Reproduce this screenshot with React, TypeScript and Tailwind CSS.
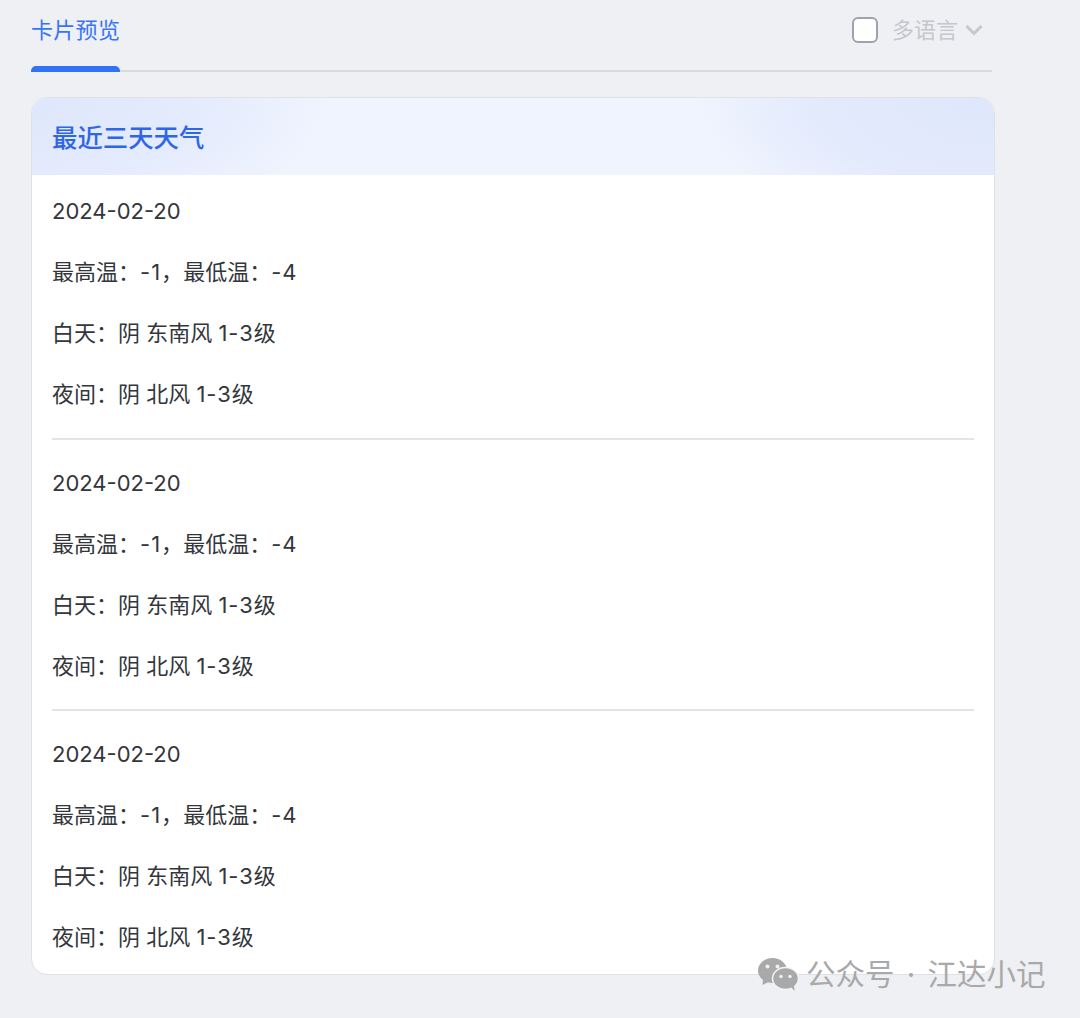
import React from "react";

const Num = ({ children }: { children: React.ReactNode }) => (
  <span className="tracking-[1px]">{children}</span>
);

const WechatLogo = () => (
  <svg width="42" height="34" viewBox="0 0 42 34" className="shrink-0">
    {/* big bubble */}
    <ellipse cx="15.5" cy="13.5" rx="14.5" ry="12.5" fill="#a9a9a9" />
    <path d="M6 22 L5.5 28 L12.5 24.5 Z" fill="#a9a9a9" />
    <circle cx="10.5" cy="9.5" r="2" fill="#eef0f3" />
    <circle cx="20.5" cy="9.5" r="2" fill="#eef0f3" />
    {/* small bubble */}
    <ellipse cx="28.5" cy="21.5" rx="13" ry="11" fill="#a9a9a9" stroke="#f4f5f7" strokeWidth="1.5" />
    <path d="M34 30 L37.5 34 L37 27 Z" fill="#a9a9a9" />
    <circle cx="24" cy="19.5" r="1.7" fill="#eef0f3" />
    <circle cx="33" cy="19.5" r="1.7" fill="#eef0f3" />
  </svg>
);

const sections = ["mt-0", "mt-[13px] border-t-2 border-[#e3e4e7] pt-[13px]", "mt-[12px] border-t-2 border-[#e3e4e7] pt-[13px]"];

const App = () => {
  return (
    <div
      className="relative h-[1018px] w-[1080px] overflow-hidden bg-[#eef0f3] pl-[31px]"
      style={{ fontFamily: 'Inter, "Noto Sans CJK SC", sans-serif' }}
    >
      {/* Tabs */}
      <div className="flex h-[72px] w-[961px] items-start justify-between border-b-2 border-[#d8dadd]">
        <div className="relative h-[70px] w-[89px]">
          <div className="whitespace-nowrap pt-[15px] text-[22px] leading-[30px] tracking-[0.3px] text-[#3a74f6]">卡片预览</div>
          <div className="absolute bottom-[-2px] left-0 h-[6px] w-[89px] rounded-t-[5px] bg-[#3273f6]" />
        </div>
        <div className="flex items-center pt-[15px] pr-[9px]">
          <div className="h-[26px] w-[26px] rounded-[6px] border-2 border-[#9ca3af] bg-white" />
          <span className="ml-[14px] text-[22px] leading-[30px] text-[#c5c7cc]">多语言</span>
          <svg width="18" height="12" viewBox="0 0 18 12" className="ml-[7px]" fill="none" stroke="#c5c7cc" strokeWidth="3">
            <path d="M1.5 2 L9 9.5 L16.5 2" />
          </svg>
        </div>
      </div>

      {/* Card */}
      <div className="mt-[25px] h-[878px] w-[964px] overflow-hidden rounded-[16px] border border-[#dfe1e6] bg-white">
        <div className="flex h-[77px] items-center bg-[radial-gradient(ellipse_300px_130px_at_100%_10%,#dfe7fc_0%,#e3eafc_60%,transparent_100%),radial-gradient(ellipse_300px_130px_at_0%_10%,#dfe7fc_0%,#e4ebfd_55%,transparent_100%),linear-gradient(90deg,#f0f4fe,#f0f4fe)] pl-[20px] pt-[3px] text-[25.4px] font-medium text-[#2e66e6]">
          最近三天天气
        </div>
        <div className="px-[20px] pt-[6px] text-[22px] text-[#33363b]">
          {sections.map((cls, i) => (
            <div key={i} className={cls}>
              <div className="flex h-[61px] items-center">2024-02-20</div>
              <div className="h-[61px] leading-[61px]">
                最高温{"\uFF1A"}<Num>-1</Num>{"\uFF0C"}最低温{"\uFF1A"}<Num>-4</Num>
              </div>
              <div className="h-[61px] leading-[61px]">
                白天{"\uFF1A"}阴 东南风 <Num>1-3</Num>级
              </div>
              <div className="h-[61px] leading-[61px]">
                夜间{"\uFF1A"}阴 北风 <Num>1-3</Num>级
              </div>
            </div>
          ))}
        </div>
      </div>

      {/* Watermark */}
      <div className="absolute left-[757px] top-[957px] flex items-center">
        <WechatLogo />
        <span className="ml-[7px] whitespace-pre text-[29.5px] leading-[34px] text-[#a9a9a9] [word-spacing:4px]">公众号 · 江达小记</span>
      </div>
    </div>
  );
};

export default App;
